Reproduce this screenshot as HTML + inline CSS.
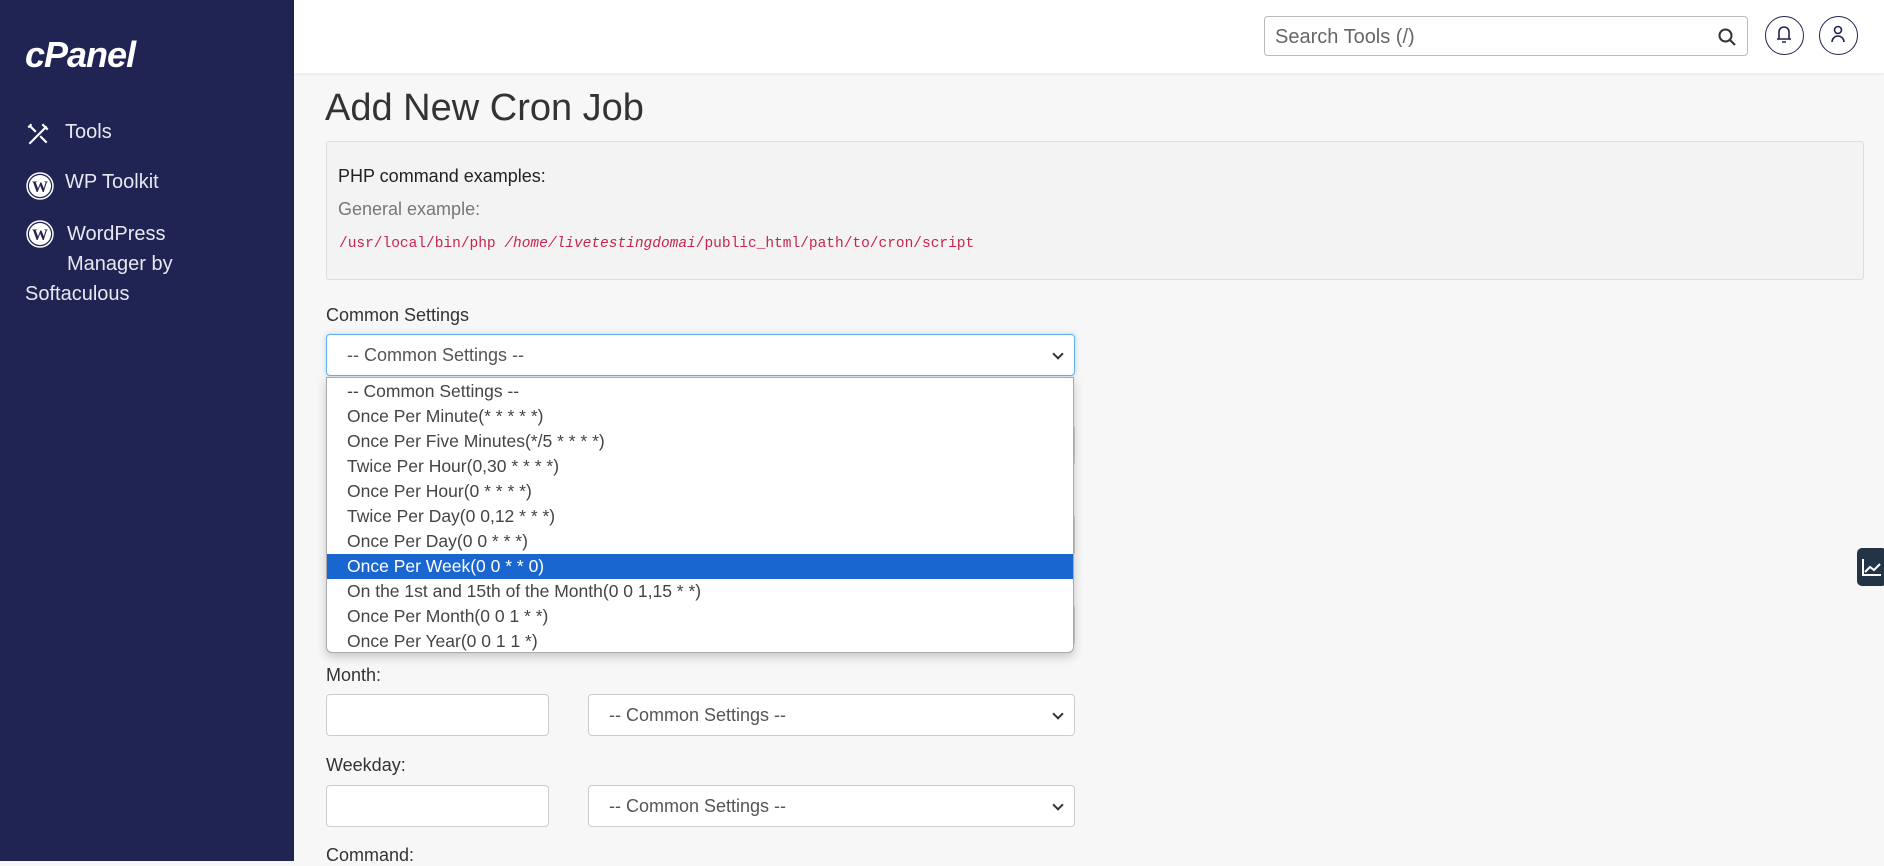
<!DOCTYPE html>
<html><head><meta charset="utf-8"><style>
*{box-sizing:border-box;margin:0;padding:0}
body{width:1884px;height:861px;overflow:hidden;background:#f7f7f7;font-family:"Liberation Sans",sans-serif;color:#333;position:relative}
#side{position:absolute;left:0;top:0;width:294px;height:861px;background:#1f2452;color:#fff}
.logo{position:absolute;left:25px;top:34px;font-size:36px;font-weight:bold;font-style:italic;letter-spacing:-1px;color:#fff}
.nav{position:absolute;left:25px;font-size:20px;color:#e8e8f0}
.nav svg{position:absolute;left:0;top:0}
#head{position:absolute;left:294px;top:0;right:0;height:73px;background:#fff;box-shadow:0 1px 3px rgba(0,0,0,.08)}
.search{position:absolute;left:1264px;top:16px;width:484px;height:40px;border:1px solid #bbb;border-radius:4px;background:#fff;font-size:20px;color:#666;padding:9px 10px}
.circ{position:absolute;top:16px;width:39px;height:39px;border:1.5px solid #1f2452;border-radius:50%}
h1{position:absolute;left:325px;top:87px;font-size:38px;font-weight:normal;color:#333}
.box{position:absolute;left:326px;top:141px;width:1538px;height:139px;background:#f3f3f3;border:1px solid #ddd;border-radius:3px}
.lbl{position:absolute;left:326px;font-size:18px;color:#333}
.sel{position:absolute;background:#fff;border:1px solid #ccc;border-radius:4px;font-size:18px;color:#555;padding:0 20px;line-height:40px}
.sel:after{content:"";position:absolute;right:12px;top:15px;width:6px;height:6px;border-right:2px solid #333;border-bottom:2px solid #333;transform:rotate(45deg)}
.inp{position:absolute;left:326px;width:223px;height:42px;background:#fff;border:1px solid #ccc;border-radius:4px}
#dd{position:absolute;left:326px;top:377px;width:748px;height:276px;background:#fff;border:1px solid #aaa;border-radius:0 0 6px 6px;box-shadow:0 4px 10px rgba(0,0,0,.2);padding-top:1px}
#dd div{height:25px;line-height:25px;padding-left:20px;font-size:17.5px;color:#444}
#dd div.h{background:#1a66d1;color:#fff}
</style></head><body>
<div id="side">
<div class="logo">cPanel</div>
<div class="nav" style="top:121px"><svg width="26" height="26" viewBox="0 0 24 24" fill="none" stroke="#fff" stroke-width="2"><path d="M4 21L20 5M16 3l5 5M4 4l6 6M14 14l6 6M3 6l3-3"/></svg><span style="margin-left:40px">Tools</span></div>
<div class="nav" style="top:171px"><svg width="30" height="30" viewBox="0 0 30 30"><circle cx="15" cy="15" r="13" fill="none" stroke="#fff" stroke-width="1.5"/><circle cx="15" cy="15" r="11" fill="#fff"/><text x="15" y="21" font-size="16" font-weight="bold" text-anchor="middle" fill="#1f2452" font-family="Liberation Serif">W</text></svg><span style="margin-left:40px">WP Toolkit</span></div>
<div class="nav" style="top:219px;line-height:30px"><svg width="30" height="30" viewBox="0 0 30 30"><circle cx="15" cy="15" r="13" fill="none" stroke="#fff" stroke-width="1.5"/><circle cx="15" cy="15" r="11" fill="#fff"/><text x="15" y="21" font-size="16" font-weight="bold" text-anchor="middle" fill="#1f2452" font-family="Liberation Serif">W</text></svg><span style="margin-left:42px">WordPress</span><br><span style="margin-left:42px">Manager by</span><br>Softaculous</div>
</div>
<div id="head"></div>
<div class="search">Search Tools (/)<svg style="position:absolute;right:10px;top:10px" width="20" height="20" viewBox="0 0 20 20" fill="none" stroke="#333" stroke-width="2"><circle cx="8.5" cy="8.5" r="6"/><path d="M13 13l5 5"/></svg></div>
<div class="circ" style="left:1765px"><svg width="36" height="36" viewBox="0 0 36 36" fill="none" stroke="#1f2452" stroke-width="1.6"><path d="M13 22V15a5 5 0 0110 0v7zM11 22h14M16 25h4"/></svg></div>
<div class="circ" style="left:1819px"><svg width="36" height="36" viewBox="0 0 36 36" fill="none" stroke="#1f2452" stroke-width="1.6"><circle cx="18" cy="13" r="3.5"/><path d="M12 25a6 6 0 0112 0"/></svg></div>
<h1>Add New Cron Job</h1>
<div class="box">
<div style="position:absolute;left:11px;top:24px;font-size:18px;color:#222">PHP command examples:</div>
<div style="position:absolute;left:11px;top:57px;font-size:18px;color:#777">General example:</div>
<div style="position:absolute;left:12px;top:94px;font-size:14.5px;color:#c7254e;font-family:'Liberation Mono',monospace">/usr/local/bin/php <i>/home/livetestingdomai</i>/public_html/path/to/cron/script</div>
</div>
<div class="lbl" style="top:305px">Common Settings</div>
<div class="sel" style="left:326px;top:334px;width:749px;height:42px;border-color:#66afe9;box-shadow:0 0 5px rgba(102,175,233,.5)">-- Common Settings --</div>
<div class="sel" style="left:588px;top:424px;width:487px;height:42px"></div>
<div class="sel" style="left:588px;top:514px;width:487px;height:42px"></div>
<div class="sel" style="left:588px;top:604px;width:487px;height:42px"></div>
<div class="lbl" style="top:665px">Month:</div>
<div class="inp" style="top:694px"></div>
<div class="sel" style="left:588px;top:694px;width:487px;height:42px">-- Common Settings --</div>
<div class="lbl" style="top:755px">Weekday:</div>
<div class="inp" style="top:785px"></div>
<div class="sel" style="left:588px;top:785px;width:487px;height:42px">-- Common Settings --</div>
<div class="lbl" style="top:845px">Command:</div>
<div id="dd">
<div>-- Common Settings --</div>
<div>Once Per Minute(* * * * *)</div>
<div>Once Per Five Minutes(*/5 * * * *)</div>
<div>Twice Per Hour(0,30 * * * *)</div>
<div>Once Per Hour(0 * * * *)</div>
<div>Twice Per Day(0 0,12 * * *)</div>
<div>Once Per Day(0 0 * * *)</div>
<div class="h">Once Per Week(0 0 * * 0)</div>
<div>On the 1st and 15th of the Month(0 0 1,15 * *)</div>
<div>Once Per Month(0 0 1 * *)</div>
<div>Once Per Year(0 0 1 1 *)</div>
</div>
<div style="position:absolute;left:1857px;top:548px;width:30px;height:38px;background:#243447;border-radius:5px"><svg width="27" height="38" viewBox="0 0 27 38" fill="none" stroke="#fff" stroke-width="2"><path d="M6 11v16h18M8 24l5-5 4 3 6-6"/></svg></div>
</body></html>
